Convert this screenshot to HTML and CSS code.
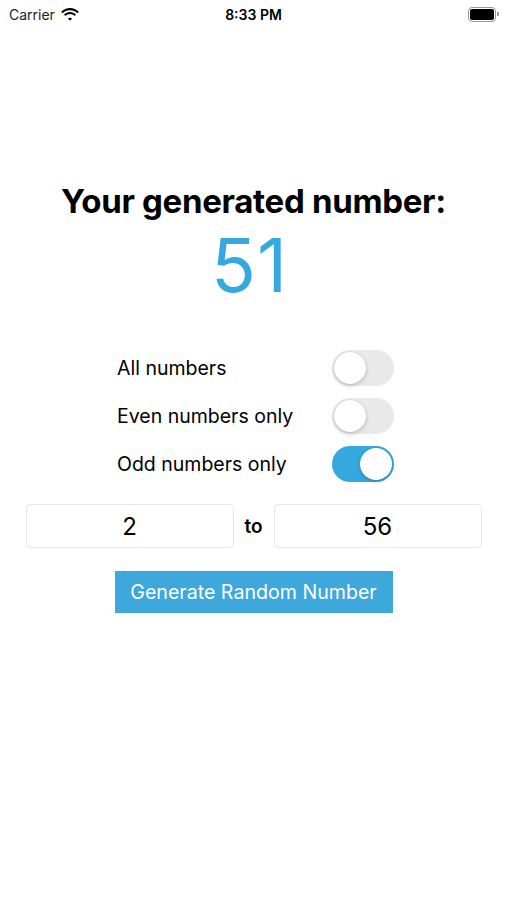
FILE: index.html
```html
<!DOCTYPE html>
<html lang="en">
<head>
  <meta charset="UTF-8">
  <meta name="viewport" content="width=device-width, initial-scale=1.0">
  <title>Random Number</title>
  <link rel="stylesheet" href="styles.css">
</head>
<body>
  <div class="status-bar">
    <div class="carrier">
      Carrier
      <svg class="wifi" width="18" height="13" viewBox="0 0 18 13">
        <path d="M9 2.2c2.9 0 5.5 1.1 7.4 3l1.4-1.5C15.5 1.4 12.4 0 9 0S2.5 1.4.2 3.7l1.4 1.5C3.5 3.3 6.1 2.2 9 2.2z" fill="#000"/>
        <path d="M9 6.1c1.8 0 3.4.7 4.6 1.8l1.4-1.5C13.4 4.9 11.3 4 9 4S4.6 4.9 3 6.4l1.4 1.5C5.6 6.8 7.2 6.1 9 6.1z" fill="#000"/>
        <path d="M9 9.8c.8 0 1.5.3 2 .8L9 12.8l-2-2.2c.5-.5 1.2-.8 2-.8z" fill="#000"/>
      </svg>
    </div>
    <div class="time">8:33 PM</div>
    <div class="battery">
      <span class="battery-body"><span class="battery-fill"></span></span>
      <span class="battery-cap"></span>
    </div>
  </div>

  <div class="main">
    <h1 class="title">Your generated number:</h1>
    <div class="result" id="result">51</div>

    <div class="options">
      <div class="option">
        <span>All numbers</span>
        <button class="toggle" data-mode="all"></button>
      </div>
      <div class="option">
        <span>Even numbers only</span>
        <button class="toggle" data-mode="even"></button>
      </div>
      <div class="option">
        <span>Odd numbers only</span>
        <button class="toggle on" data-mode="odd"></button>
      </div>
    </div>

    <div class="range">
      <input class="range-input" id="min" type="text" value="2">
      <span class="range-to">to</span>
      <input class="range-input" id="max" type="text" value="56">
    </div>

    <button class="generate" id="generate">Generate Random Number</button>
  </div>

  <script>
    var toggles = document.querySelectorAll('.toggle');
    var mode = 'odd';

    toggles.forEach(function(t) {
      t.addEventListener('click', function() {
        toggles.forEach(function(o) { o.classList.remove('on'); });
        t.classList.add('on');
        mode = t.getAttribute('data-mode');
      });
    });

    document.getElementById('generate').addEventListener('click', function() {
      var min = parseInt(document.getElementById('min').value, 10);
      var max = parseInt(document.getElementById('max').value, 10);
      if (isNaN(min) || isNaN(max) || min > max) return;
      var picks = [];
      for (var i = min; i <= max; i++) {
        if (mode === 'even' && i % 2 !== 0) continue;
        if (mode === 'odd' && i % 2 === 0) continue;
        picks.push(i);
      }
      if (!picks.length) return;
      document.getElementById('result').textContent = picks[Math.floor(Math.random() * picks.length)];
    });
  </script>
</body>
</html>
```

FILE: styles.css
```css
body {
  margin: 0;
  font-family: Inter, "Noto Sans", sans-serif;
  background-color: #fff;
  color: #000;
}
.status-bar {
  display: flex;
  align-items: center;
  justify-content: space-between;
  height: 28px;
  padding: 0 8px 0 9px;
  position: relative;
}
.carrier {
  display: flex;
  align-items: center;
  gap: 6px;
  font-size: 14px;
  color: #222;
}
.time {
  position: absolute;
  left: 0;
  right: 0;
  text-align: center;
  font-size: 14px;
  font-weight: 600;
  pointer-events: none;
}
.battery {
  display: flex;
  align-items: center;
}
.battery-body {
  width: 24px;
  height: 11px;
  border: 1px solid #999;
  border-radius: 4px;
  padding: 1px;
  box-sizing: content-box;
}
.battery-fill {
  display: block;
  width: 100%;
  height: 100%;
  background-color: #000;
  border-radius: 2px;
}
.battery-cap {
  width: 2px;
  height: 4px;
  background-color: #999;
  border-radius: 0 1px 1px 0;
  margin-left: 1px;
}
.main {
  display: flex;
  flex-direction: column;
  align-items: center;
  padding-top: 154px;
}
.title {
  margin: 0;
  font-size: 33px;
  font-weight: 700;
  letter-spacing: -0.3px;
  line-height: 38px;
}
.result {
  margin-top: 9px;
  margin-right: 8px;
  font-size: 74px;
  line-height: 72px;
  letter-spacing: 1px;
  color: #35a8e0;
}
.options {
  width: 277px;
  margin-top: 49px;
  margin-left: 4px;
  display: flex;
  flex-direction: column;
  gap: 12px;
}
.option {
  display: flex;
  align-items: center;
  justify-content: space-between;
  height: 36px;
  font-size: 19.5px;
}
.toggle {
  width: 62px;
  height: 36px;
  border: none;
  border-radius: 18px;
  background-color: #e9e9ea;
  position: relative;
  cursor: pointer;
  padding: 0;
}
.toggle::after {
  content: "";
  position: absolute;
  top: 2px;
  left: 2px;
  width: 32px;
  height: 32px;
  border-radius: 50%;
  background-color: #fff;
  box-shadow: 0 2px 4px rgba(0,0,0,0.18), 0 0 1px rgba(0,0,0,0.2);
}
.toggle.on {
  background-color: #36a8e0;
}
.toggle.on::after {
  left: 28px;
}
.range {
  display: flex;
  align-items: center;
  margin-top: 22px;
  width: 456px;
}
.range-input {
  width: 208px;
  height: 44px;
  box-sizing: border-box;
  border: 1px solid #e6e6e6;
  border-radius: 4px;
  text-align: center;
  font-family: Inter, "Noto Sans", sans-serif;
  font-size: 24px;
  color: #000;
  outline: none;
}
.range-to {
  flex: 1;
  text-align: center;
  font-size: 19px;
  font-weight: 600;
}
.generate {
  margin-top: 23px;
  width: 278px;
  height: 42px;
  border: none;
  background-color: #3ea7db;
  color: #fff;
  font-family: Inter, "Noto Sans", sans-serif;
  font-size: 19.6px;
  cursor: pointer;
}
```
